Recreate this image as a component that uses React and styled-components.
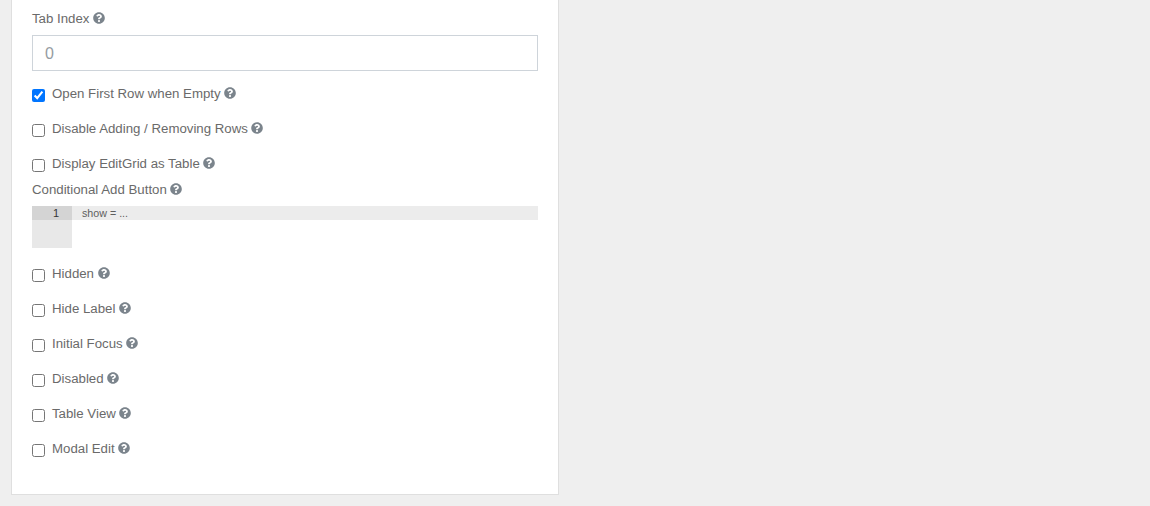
import React from "react";
import styled, { createGlobalStyle } from "styled-components";
import { FaQuestionCircle } from "react-icons/fa";

const Global = createGlobalStyle`
  html, body { margin: 0; padding: 0; background: #efefef; }
  body { font-family: "Liberation Sans", Arial, sans-serif; overflow: hidden; }
`;
const Page = styled.div`
  height: 506px;
  overflow: hidden;
  box-sizing: border-box;
  padding-left: 11px;
`;
const Card = styled.section`
  width: 548px;
  height: 495px;
  box-sizing: border-box;
  background: #fff;
  border: 1px solid #dfdfdf;
  border-top: 0;
  padding: 9px 20px 0;
  color: #6a6a6a;
  font-size: 13.26px;
  line-height: 18px;
`;
const Label = styled.div`
  display: flex;
  align-items: center;
  gap: 3.5px;
  height: 18px;
`;
const LabelText = styled.span`
  padding-top: 2px;
`;
const Help = styled(FaQuestionCircle)`
  width: 12px;
  height: 12px;
  color: #7b848c;
  flex: none;
`;
const TextInput = styled.div`
  box-sizing: border-box;
  height: 36px;
  margin: 8px 0 13px;
  border: 1px solid #ced4da;
  padding: 1px 12px 0;
  display: flex;
  align-items: center;
  font-size: 16px;
  color: #969ca2;
`;
const CheckRow = styled.label`
  display: flex;
  align-items: flex-start;
  height: 18px;
  margin-bottom: 17px;
`;
const LastCheckRow = styled(CheckRow)`
  margin-bottom: 8px;
`;
const Box = styled.input.attrs({ type: "checkbox" })`
  width: 13px;
  height: 13px;
  margin: 5px 7px 0 0;
  flex: none;
  accent-color: #0075ff;
`;
const Editor = styled.div`
  display: flex;
  height: 42px;
  margin: 8px 0 16px;
  font-size: 10.7px;
  line-height: 14px;
`;
const Gutter = styled.div`
  width: 40px;
  background: #e8e8e8;
`;
const GutterLine = styled.div`
  height: 14px;
  background: #d4d4d4;
  color: #333;
  text-align: right;
  padding-right: 13px;
  box-sizing: border-box;
  font-size: 11px;
`;
const Code = styled.div`
  flex: 1;
`;
const CodeLine = styled.div`
  height: 14px;
  background: #ececec;
  padding-left: 10px;
  color: #5e5e5e;
`;

const Check = ({ text, checked, as: Row = CheckRow }) => (
  <Row>
    <Box defaultChecked={checked} />
    <Label><LabelText>{text}</LabelText><Help /></Label>
  </Row>
);

export default function App() {
  return (
    <Page>
      <Global />
      <Card>
        <Label><LabelText>Tab Index</LabelText><Help /></Label>
        <TextInput>0</TextInput>
        <Check text="Open First Row when Empty" checked />
        <Check text="Disable Adding / Removing Rows" />
        <Check text="Display EditGrid as Table" as={LastCheckRow} />
        <Label><LabelText>Conditional Add Button</LabelText><Help /></Label>
        <Editor>
          <Gutter><GutterLine>1</GutterLine></Gutter>
          <Code><CodeLine>show = ...</CodeLine></Code>
        </Editor>
        <Check text="Hidden" />
        <Check text="Hide Label" />
        <Check text="Initial Focus" />
        <Check text="Disabled" />
        <Check text="Table View" />
        <Check text="Modal Edit" />
      </Card>
    </Page>
  );
}
